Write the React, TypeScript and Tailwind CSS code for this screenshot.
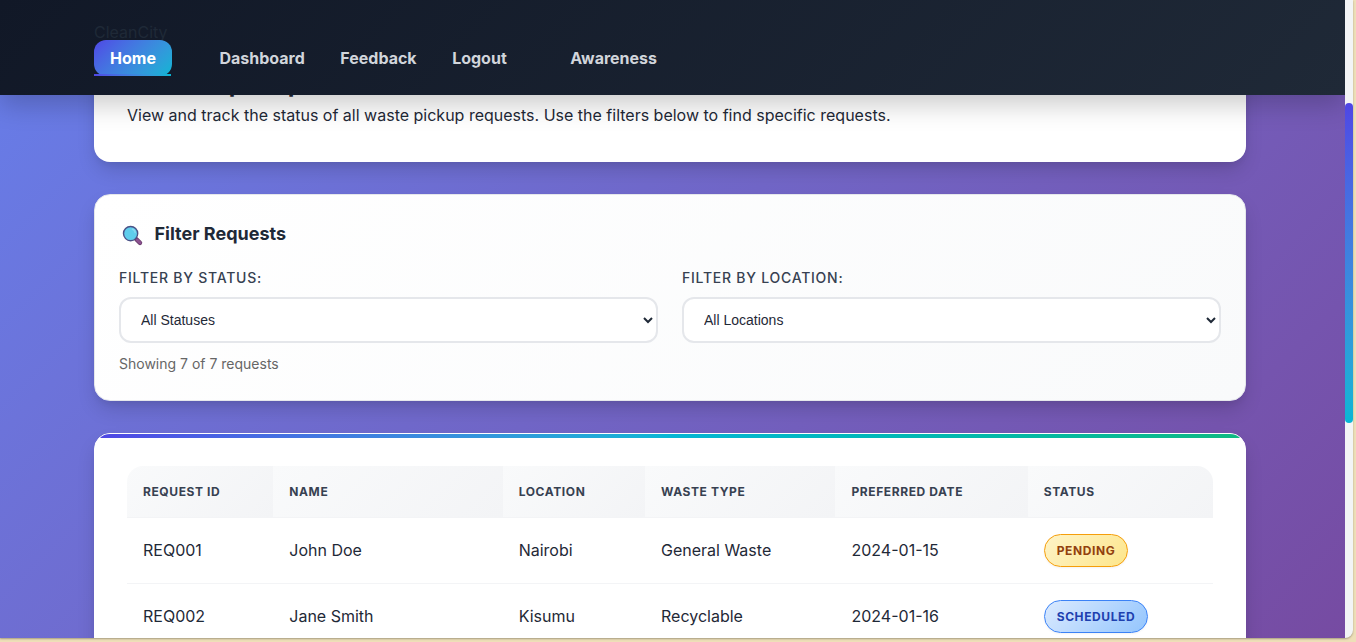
import type { ReactNode } from "react";

const navItems = [
  { label: "Home", cls: "w-[78px]" },
  { label: "Dashboard", cls: "ml-[47.5px]" },
  { label: "Feedback", cls: "ml-[35.5px]" },
  { label: "Logout", cls: "ml-[35.5px]" },
  { label: "Awareness", cls: "ml-[63.5px]" },
];

const columns = [
  { label: "Request ID", cls: "w-[146.3px]" },
  { label: "Name", cls: "w-[229.4px]" },
  { label: "Location", cls: "w-[142.3px]" },
  { label: "Waste Type", cls: "w-[190.5px]" },
  { label: "Preferred Date", cls: "w-[192.2px]" },
  { label: "Status", cls: "w-[185.3px]" },
];

const badgeStyles: Record<string, string> = {
  Pending: "border-[#f59e0b] from-[#fef3c7] to-[#fde68a] text-[#92400e]",
  Scheduled: "border-[#3b82f6] from-[#dbeafe] to-[#93c5fd] text-[#1e40af]",
};

const requests = [
  { id: "REQ001", name: "John Doe", location: "Nairobi", type: "General Waste", date: "2024-01-15", status: "Pending" },
  { id: "REQ002", name: "Jane Smith", location: "Kisumu", type: "Recyclable", date: "2024-01-16", status: "Scheduled" },
];

const cardShadow = "shadow-[0_10px_20px_-3px_rgba(0,0,0,0.16),0_4px_6px_-2px_rgba(0,0,0,0.06)]";

function SearchIcon() {
  return (
    <svg width="22" height="22" viewBox="0 0 22 22" aria-hidden="true">
      <path d="M14.2 14.2 L18 17.9" stroke="#6d3f70" strokeWidth="4.4" strokeLinecap="round" />
      <path d="M15.2 15 L18 17.7" stroke="#8c5290" strokeWidth="2.8" strokeLinecap="round" />
      <circle cx="8.6" cy="8.6" r="7.1" fill="#5fcdec" stroke="#4a5187" strokeWidth="1.4" />
      <path d="M10.5 4.2 Q13 5 13.2 7.6" fill="none" stroke="#86d9f0" strokeWidth="1.5" strokeLinecap="round" />
    </svg>
  );
}

function Header() {
  return (
    <header className="relative z-10 h-[95px] shrink-0 bg-linear-135 from-[#111827] to-[#1f2937] px-[94px] pt-[19px] shadow-[0_10px_25px_rgba(0,0,0,0.2)]">
      <div className="h-[21px] text-[16px] leading-[26px] text-[#1f2937]">CleanCity</div>
      <nav className="flex h-[36px]">
        {navItems.map((item, i) => (
          <a
            key={item.label}
            href="#"
            className={`relative flex items-center justify-center text-[16px] font-[650] ${item.cls} ${
              i === 0 ? "rounded-[12px] bg-linear-135 from-[#4f46e5] to-[#06b6d4] text-white" : "text-[#d1d5db]"
            }`}
          >
            {item.label}
            {i === 0 && <span className="absolute bottom-0 left-0 h-[2px] w-[77px] bg-linear-to-r from-[#4f46e5] to-[#06b6d4]" />}
          </a>
        ))}
      </nav>
    </header>
  );
}

function FilterField({ label, option }: { label: string; option: string }) {
  return (
    <div className="flex flex-col">
      <label className="text-[14px] leading-[22px] font-[550] tracking-[0.75px] text-[#374151] uppercase">{label}</label>
      <select className="mt-[8px] h-[46px] w-full rounded-[12px] border-2 border-[#e5e7eb] bg-white px-[16px] font-['Liberation_Sans',sans-serif] text-[14px] text-[#1f2937] outline-none">
        <option>{option}</option>
      </select>
    </div>
  );
}

function Cell({ children }: { children: ReactNode }) {
  return <td className="h-[66px] border-b border-[#f3f4f6] px-[16px] pb-[2px] text-[16px] leading-[26px]">{children}</td>;
}

export default function App() {
  return (
    <div className="h-[642px] w-[1356px] overflow-hidden bg-[#eedfb8] font-['Inter',sans-serif] text-[#1f2937]">
      <div className="flex h-[638px] w-[1353px] overflow-hidden rounded-br-[8px] bg-[#f3f4f6] shadow-[0_1px_2px_rgba(0,0,0,0.3)]">
        <div className="flex w-[1345px] flex-col overflow-hidden bg-linear-135 from-[#667eea] to-[#764ba2]">
          <Header />
          <main className="-mt-[62px] flex flex-col gap-[32px] pr-[99px] pl-[94px]">
            <section className={`h-[129px] shrink-0 rounded-[16px] bg-white px-[33px] pt-[33px] ${cardShadow}`}>
              <h2 className="text-[24px] leading-[36px] font-bold">All Pickup Requests</h2>
              <p className="text-[16px] leading-[26px]">
                View and track the status of all waste pickup requests. Use the filters below to find specific requests.
              </p>
            </section>

            <section className={`h-[207px] shrink-0 rounded-[16px] border border-[#e5e7eb] bg-linear-135 from-white to-[#f9fafb] px-[24px] pt-[25px] ${cardShadow}`}>
              <h3 className="flex h-[28px] items-center text-[18px] leading-[28px] font-[650]">
                <span className="ml-[3px] flex w-[32.5px] pt-[3px]">
                  <SearchIcon />
                </span>
                Filter Requests
              </h3>
              <div className="mt-[19px] grid grid-cols-[539px_539px] gap-[24px]">
                <FilterField label="Filter by Status:" option="All Statuses" />
                <FilterField label="Filter by Location:" option="All Locations" />
              </div>
              <p className="mt-[10px] text-[14px] leading-[22px] text-[#666666]">Showing 7 of 7 requests</p>
            </section>

            <section className={`h-[480px] shrink-0 overflow-hidden rounded-[16px] border border-white bg-white ${cardShadow}`}>
              <div className="h-[4px] bg-linear-to-r from-[#4f46e5] via-[#06b6d4] to-[#10b981]" />
              <div className="px-[32px] pt-[28px]">
                <div className="overflow-hidden rounded-[16px]">
                  <table className="w-[1086px] table-fixed border-separate border-spacing-0">
                    <thead>
                      <tr>
                        {columns.map((c) => (
                          <th
                            key={c.label}
                            className={`h-[52px] border-b border-[#f3f4f6] bg-linear-135 from-[#f9fafb] to-[#f3f4f6] px-[16px] text-left text-[12px] font-[650] tracking-[0.6px] text-[#374151] uppercase ${c.cls}`}
                          >
                            {c.label}
                          </th>
                        ))}
                      </tr>
                    </thead>
                    <tbody>
                      {requests.map((r) => (
                        <tr key={r.id}>
                          <Cell>{r.id}</Cell>
                          <Cell>{r.name}</Cell>
                          <Cell>{r.location}</Cell>
                          <Cell>{r.type}</Cell>
                          <Cell>{r.date}</Cell>
                          <Cell>
                            <span
                              className={`mt-[1px] flex h-[33px] w-fit items-center rounded-full border bg-linear-135 px-[12px] pt-[1px] text-[12px] font-[650] tracking-[0.6px] uppercase shadow-[0_1px_2px_rgba(0,0,0,0.05)] ${badgeStyles[r.status]}`}
                            >
                              {r.status}
                            </span>
                          </Cell>
                        </tr>
                      ))}
                    </tbody>
                  </table>
                </div>
              </div>
            </section>
          </main>
        </div>
        <div className="w-[8px] pt-[103px]">
          <div className="h-[320px] rounded-[4px] bg-linear-to-b from-[#4f46e5] to-[#06b6d4]" />
        </div>
      </div>
    </div>
  );
}
